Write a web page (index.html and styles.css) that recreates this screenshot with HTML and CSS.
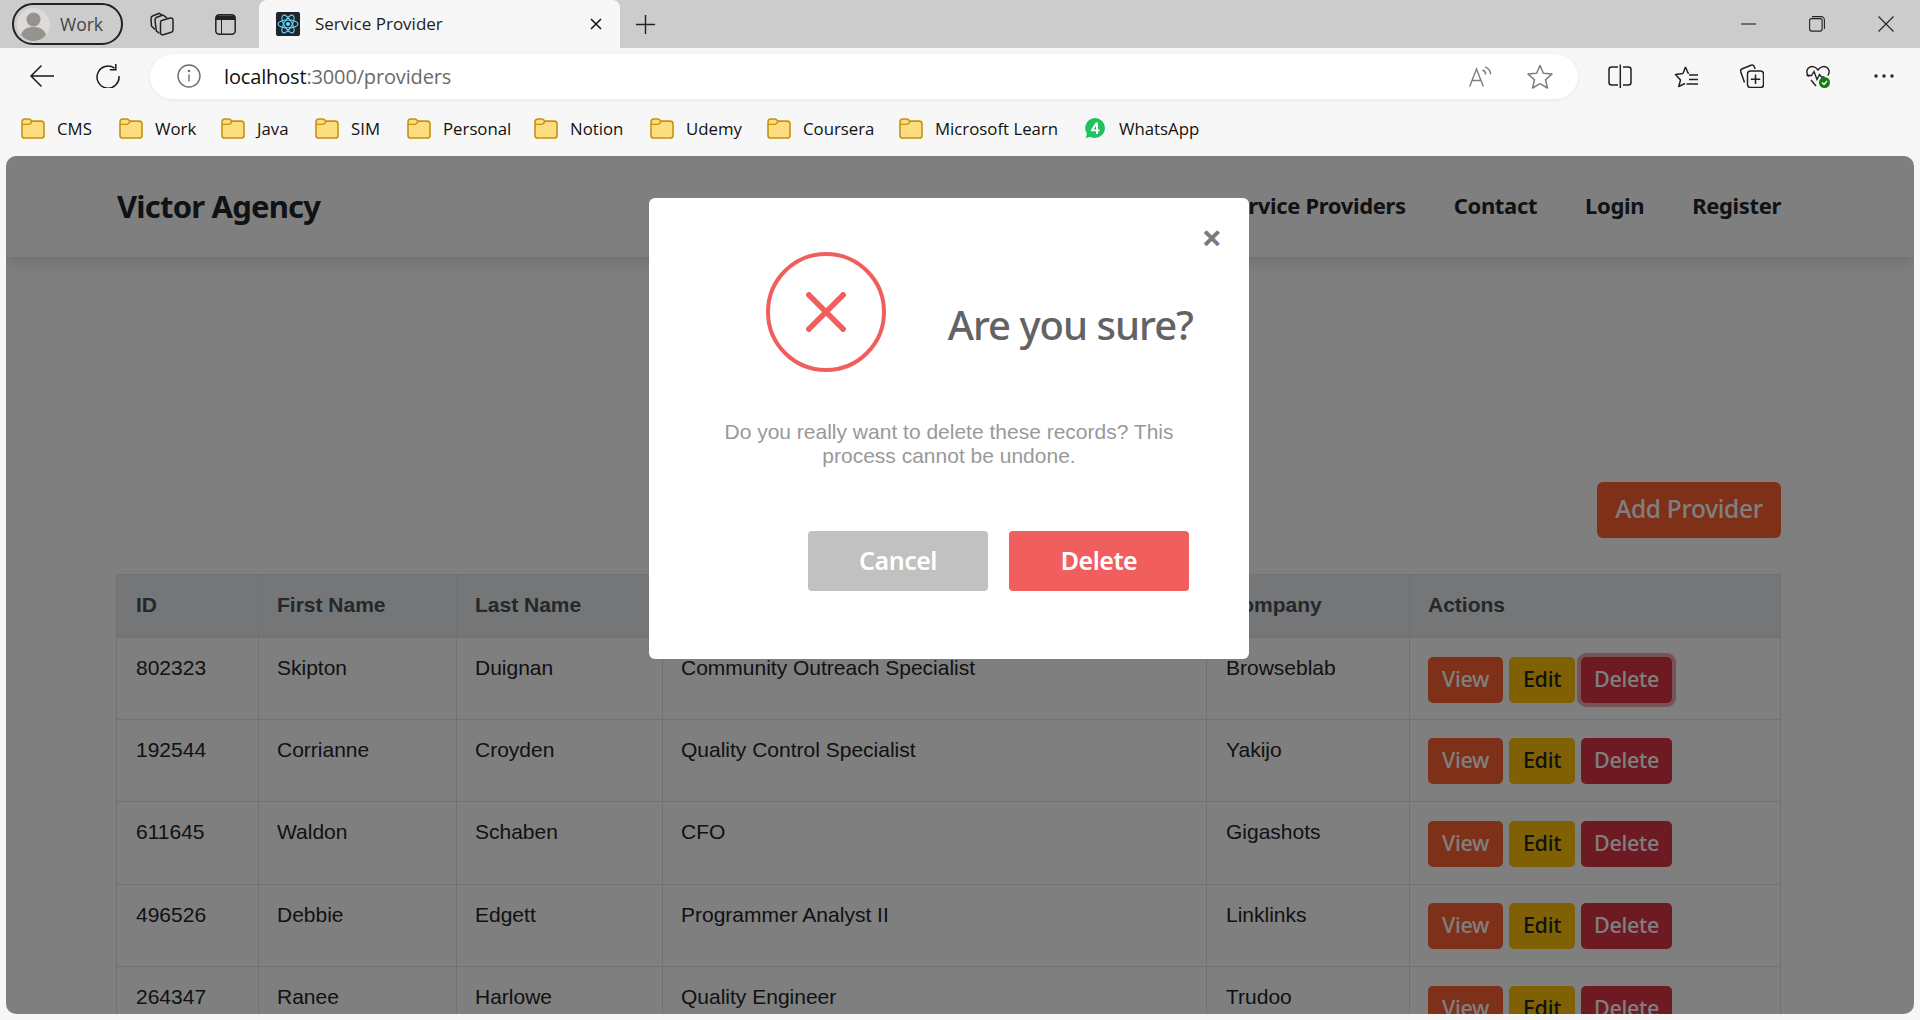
FILE: index.html
```html
<!DOCTYPE html>
<html lang="en">
<head>
<meta charset="utf-8">
<title>Service Provider</title>
<link rel="stylesheet" href="styles.css">
</head>
<body>
<svg class="defs" width="0" height="0" aria-hidden="true">
  <symbol id="folder" viewBox="0 0 24 21">
    <path d="M1 4.2C1 2.4 2.3 1 4 1h3.6c.9 0 1.6.4 2.2 1l1 1.1H20.4C22 3.1 23 4.2 23 5.8v11.6c0 1.6-1.1 2.6-2.6 2.6H3.6C2 20 1 19 1 17.4z" fill="#fddd80" stroke="#c4930f" stroke-width="1.6"/>
    <path d="M1.2 6.4h6.2c.9 0 1.5-.3 2.1-.9l1.6-2" fill="none" stroke="#c4930f" stroke-width="1.4"/>
  </symbol>
</svg>

<header class="tabbar">
  <div class="profile">
    <svg class="avatar" viewBox="0 0 33 33"><circle cx="16.500" cy="16.500" r="16.500" fill="#dcdbd8"/><circle cx="16.500" cy="11.500" r="7" fill="#96928e"/><path d="M4 27c1.500-5.500 6-8 12.500-8s11 2.500 12.500 8c-3 3.800-7.500 6-12.500 6S7 30.800 4 27z" fill="#96928e"/></svg>
    <span>Work</span>
  </div>
  <svg class="ic-collections" viewBox="0 0 24 24" fill="none" stroke="#222" stroke-width="1.500" stroke-linejoin="round" stroke-linecap="round"><path d="M4.500 17L1.500 14 1 6.500C1 5.200 1.700 4.300 3 3.800L9.500 1.200 11.500 3"/><path d="M9 21L6.300 18.800 5 8C4.900 6.700 5.600 5.700 6.800 5.200L13 3 16.500 5.700"/><path d="M10.500 10.500C10.500 9.300 11.200 8.500 12.300 8.200L20.300 6C21.900 5.600 23 6.500 23 8V18C23 19.200 22.400 20 21.300 20.300L13.300 22.700C11.700 23.100 10.500 22.200 10.500 20.700Z"/></svg>
  <svg class="ic-vtabs" viewBox="0 0 21 21" fill="none" stroke="#222" stroke-width="1.500"><rect x=".8" y=".8" width="19.400" height="19.400" rx="3.500"/><path d="M1 1.500h19v4.500H7v14H6V6H1z" fill="#222" stroke="none"/></svg>
  <div class="tab">
    <svg class="favicon" viewBox="0 0 24 24"><rect width="24" height="24" rx="2" fill="#20232a"/><g fill="none" stroke="#61dafb" stroke-width="1.100"><ellipse cx="12" cy="12" rx="10" ry="4"/><ellipse cx="12" cy="12" rx="10" ry="4" transform="rotate(60 12 12)"/><ellipse cx="12" cy="12" rx="10" ry="4" transform="rotate(120 12 12)"/></g><circle cx="12" cy="12" r="2" fill="#61dafb"/></svg>
    <span class="tab-title">Service Provider</span>
    <svg class="tab-close" viewBox="0 0 12 12" stroke="#111" stroke-width="1.500"><path d="M1 1l10 10M11 1L1 11"/></svg>
  </div>
  <svg class="ic-plus" viewBox="0 0 22 22" stroke="#222" stroke-width="1.500"><path d="M11 1v20M1 11h20"/></svg>
  <div class="winctl">
    <svg viewBox="0 0 16 16" stroke="#222" stroke-width="1.100" fill="none"><path d="M0 8h15"/></svg>
    <svg viewBox="0 0 16 16" stroke="#222" stroke-width="1.100" fill="none"><rect x=".6" y="2.600" width="12.500" height="12.500" rx="2"/><path d="M3 .6h9c1.800 0 3.400 1.500 3.400 3.400v9"/></svg>
    <svg viewBox="0 0 16 16" stroke="#222" stroke-width="1.100" fill="none"><path d="M.5.500l15 15M15.500.500l-15 15"/></svg>
  </div>
</header>

<div class="toolbar">
  <div class="tb-btn"><svg class="ic24" viewBox="0 0 24 24" fill="none" stroke="#1a1a1a" stroke-width="1.500"><path d="M24 12H1.500M11.500 1.500L1 12l10.500 10.500"/></svg></div>
  <div class="tb-btn"><svg class="ic24" viewBox="0 0 24 24" fill="none" stroke="#1a1a1a" stroke-width="1.500"><path d="M18.500 4.200A11 11 0 1 0 23 12"/><path d="M19.800 0v5.700h-6"/></svg></div>
  <div class="omnibox">
    <svg class="ic-info" viewBox="0 0 24 24" fill="none" stroke="#6e6e6e" stroke-width="1.400"><circle cx="12" cy="12" r="11"/><path d="M12 10.500v7"/><circle cx="12" cy="7" r=".6" fill="#6e6e6e"/></svg>
    <span class="url"><span class="url-host">localhost</span>:3000/providers</span>
    <svg class="ic-read" viewBox="0 0 24 21" fill="none" stroke="#7d7d7d" stroke-width="1.400"><path d="M.7 20.500L7.500 3l6.800 17.500M3 14.500h9"/><path d="M13.500 4c1.800.6 3 2.200 3.200 4.500M16 .8c3 1 5.300 3.700 5.600 7.500"/></svg>
    <svg class="ic-star" viewBox="0 0 26 25" fill="none" stroke="#7d7d7d" stroke-width="1.500"><path d="M13 1.500l3.400 7.800 8.500.8-6.400 5.600 1.900 8.300L13 19.700 5.600 24l1.900-8.300L1.100 10.100l8.500-.8z" stroke-linejoin="round"/></svg>
  </div>
  <div class="tb-right">
    <div class="tb-btn"><svg class="ic24" viewBox="0 0 24 24" fill="none" stroke="#222" stroke-width="1.500"><path d="M10 3H3.500C2 3 1 4 1 5.500v13C1 20 2 21 3.500 21H10M15 3h5.500C22 3 23 4 23 5.500v13c0 1.500-1 2.500-2.500 2.500H15"/><path d="M12.300.5v23.500"/></svg></div>
    <div class="tb-btn"><svg class="ic24" viewBox="0 0 24 24" fill="none" stroke="#222" stroke-width="1.500"><path d="M11.500 3l2.500 6 1 .3M9 9.500l-7.500 1 5 5.500-1.800 6.500 6.300-3M11.500 3L9 9.500" stroke-linejoin="round"/><path d="M15 11h9M15 15.500h9M12.500 20h11.500"/></svg></div>
    <div class="tb-btn"><svg class="ic24" viewBox="0 0 24 24" fill="none" stroke="#222" stroke-width="1.500"><path d="M4.500 18.500L.8 8c-.4-1.400.3-2.700 1.500-3.200L11 1.200c1.400-.5 2.700.2 3.300 1.600l.8 2.200"/><rect x="7.500" y="7" width="16" height="16.500" rx="3"/><path d="M15.500 10.500v9.500M10.800 15.300h9.400"/></svg></div>
    <div class="tb-btn"><svg class="ic24" viewBox="0 0 24 24" fill="none"><path d="M3 12.500C1 10.500.5 8.500 1 6.500 1.800 3.500 5 1.800 8 2.800c1.500.5 3 1.800 4 3.200 1-1.400 2.500-2.700 4-3.200 3-1 6.200.7 7 3.700.4 1.800 0 3.500-1.200 5.200" stroke="#222" stroke-width="1.400"/><path d="M.5 11.500h5l2.500-4 3 8 2.500-5 2 2.500h3M5 16l5 6" stroke="#222" stroke-width="1.400"/><circle cx="18.500" cy="18.500" r="5.500" fill="#107c10"/><path d="M16 18.500l2 2 3-3.500" stroke="#fff" stroke-width="1.400"/></svg></div>
    <div class="tb-btn"><svg class="ic-more" viewBox="0 0 20 4" fill="#222"><circle cx="2" cy="2" r="1.700"/><circle cx="10" cy="2" r="1.700"/><circle cx="18" cy="2" r="1.700"/></svg></div>
  </div>
</div>

<nav class="bookmarks">
  <a class="bm"><svg class="folder"><use href="#folder"/></svg><span>CMS</span></a>
  <a class="bm"><svg class="folder"><use href="#folder"/></svg><span>Work</span></a>
  <a class="bm"><svg class="folder"><use href="#folder"/></svg><span>Java</span></a>
  <a class="bm"><svg class="folder"><use href="#folder"/></svg><span>SIM</span></a>
  <a class="bm"><svg class="folder"><use href="#folder"/></svg><span>Personal</span></a>
  <a class="bm"><svg class="folder"><use href="#folder"/></svg><span>Notion</span></a>
  <a class="bm"><svg class="folder"><use href="#folder"/></svg><span>Udemy</span></a>
  <a class="bm"><svg class="folder"><use href="#folder"/></svg><span>Coursera</span></a>
  <a class="bm"><svg class="folder"><use href="#folder"/></svg><span>Microsoft Learn</span></a>
  <a class="bm"><svg class="wa" viewBox="0 0 20 20"><path d="M10 0a10 10 0 0 1 0 20c-1.700 0-3.300-.4-4.700-1.200L.7 20l1.300-4.400A10 10 0 0 1 10 0z" fill="#1fc25c"/><path d="M10.800 4.500L6 11.800v1.400h5v2.800h2v-2.800h1.500v-1.700H13V4.500zM11 7.800v3.700H8.500z" fill="#fff"/></svg><span>WhatsApp</span></a>
</nav>

<main class="viewport">
  <div class="site-nav">
    <span class="brand">Victor Agency</span>
    <ul class="nav-links">
      <li>Home</li>
      <li>About</li>
      <li>Service Providers</li>
      <li>Contact</li>
      <li>Login</li>
      <li>Register</li>
    </ul>
  </div>
  <section class="content">
    <div class="add-row"><button class="btn btn-add">Add Provider</button></div>
    <table class="grid">
      <colgroup><col class="c1"><col class="c2"><col class="c3"><col class="c4"><col class="c5"><col class="c6"></colgroup>
      <thead><tr><th>ID</th><th>First Name</th><th>Last Name</th><th>Job Title</th><th>Company</th><th>Actions</th></tr></thead>
      <tbody>
        <tr><td>802323</td><td>Skipton</td><td>Duignan</td><td>Community Outreach Specialist</td><td>Browseblab</td><td><div class="acts"><button class="btn btn-s view">View</button><button class="btn btn-s edit">Edit</button><button class="btn btn-s del focus">Delete</button></div></td></tr>
        <tr><td>192544</td><td>Corrianne</td><td>Croyden</td><td>Quality Control Specialist</td><td>Yakijo</td><td><div class="acts"><button class="btn btn-s view">View</button><button class="btn btn-s edit">Edit</button><button class="btn btn-s del">Delete</button></div></td></tr>
        <tr><td>611645</td><td>Waldon</td><td>Schaben</td><td>CFO</td><td>Gigashots</td><td><div class="acts"><button class="btn btn-s view">View</button><button class="btn btn-s edit">Edit</button><button class="btn btn-s del">Delete</button></div></td></tr>
        <tr><td>496526</td><td>Debbie</td><td>Edgett</td><td>Programmer Analyst II</td><td>Linklinks</td><td><div class="acts"><button class="btn btn-s view">View</button><button class="btn btn-s edit">Edit</button><button class="btn btn-s del">Delete</button></div></td></tr>
        <tr><td>264347</td><td>Ranee</td><td>Harlowe</td><td>Quality Engineer</td><td>Trudoo</td><td><div class="acts"><button class="btn btn-s view">View</button><button class="btn btn-s edit">Edit</button><button class="btn btn-s del">Delete</button></div></td></tr>
      </tbody>
    </table>
  </section>

  <div class="overlay"></div>
  <div class="modal" role="dialog">
    <span class="modal-close">×</span>
    <div class="modal-head">
      <div class="icon-box"><svg viewBox="0 0 40 40" stroke="#f15e5e" stroke-width="5.500"><path d="M1 1l38 38M39 1L1 39"/></svg></div>
      <h2 class="modal-title">Are you sure?</h2>
    </div>
    <p class="modal-text">Do you really want to delete these records? This process cannot be undone.</p>
    <div class="modal-foot">
      <button class="mbtn cancel">Cancel</button>
      <button class="mbtn confirm">Delete</button>
    </div>
  </div>
</main>
</body>
</html>
```

FILE: styles.css
```css
* { box-sizing: border-box; }
html, body { margin: 0; padding: 0; }
body {
  width: 1920px;
  height: 1020px;
  overflow: hidden;
  background: #f7f7f7;
  font-family: "Open Sans", "Noto Sans", sans-serif;
  color: #111;
}
.defs { position: absolute; }

/* Browser tab strip */
.tabbar {
  height: 48px;
  background: #cccccc;
  display: flex;
  align-items: center;
  position: relative;
}
.profile {
  margin-left: 12px;
  width: 111px;
  height: 42px;
  border: 2px solid #222;
  border-radius: 21px;
  display: flex;
  align-items: center;
  gap: 10px;
  padding-left: 3px;
  font-size: 17.500px;
  color: #444;
}
.avatar { width: 33px; height: 33px; }
.ic-collections { width: 24px; height: 24px; margin-left: 27px; }
.ic-vtabs { width: 21px; height: 21px; margin-left: 41px; }
.tab {
  margin-left: 23px;
  width: 361px;
  height: 48px;
  background: #f7f7f7;
  border-radius: 8px 8px 0 0;
  display: flex;
  align-items: center;
  padding-left: 17px;
}
.favicon { width: 24px; height: 24px; }
.tab-title { margin-left: 15px; padding-bottom: 2px; font-size: 17px; color: #222; width: 266px; white-space: nowrap; }
.tab-close { width: 12px; height: 12px; margin-left: 9px; }
.ic-plus { width: 21px; height: 21px; margin-left: 15px; }
.winctl { margin-left: auto; display: flex; gap: 52px; padding-right: 26px; }
.winctl svg { width: 16px; height: 16px; }
.winctl svg:last-child { margin-left: 1px; }

/* Address bar row */
.toolbar {
  height: 52px;
  display: flex;
  align-items: center;
  padding-left: 9px;
  padding-top: 4px;
}
.tb-btn { width: 66px; display: flex; justify-content: center; align-items: center; }
.ic24 { width: 24px; height: 24px; }
.ic-more { width: 20px; height: 4px; }
.omnibox {
  margin-left: 9px;
  width: 1428px;
  height: 45px;
  background: #fff;
  border-radius: 23px;
  box-shadow: 0 1px 4px rgba(0,0,0,.07);
  display: flex;
  align-items: center;
  padding-left: 27px;
}
.ic-info { width: 24px; height: 24px; }
.url { margin-left: 23px; font-size: 20px; color: #6a6a6a; letter-spacing: -.15px; }
.url-host { color: #111; }
.ic-read { width: 24px; height: 21px; margin-left: auto; }
.ic-star { width: 26px; height: 25px; margin-left: 34px; margin-right: 25px; }
.tb-right { margin-left: 9px; display: flex; }

/* Bookmarks */
.bookmarks {
  height: 56px;
  display: grid;
  grid-template-columns: 98px 102px 94px 92px 127px 116px 117px 132px 186px 120px;
  align-items: center;
  padding-left: 21px;
  font-size: 16.800px;
}
.bm { display: flex; align-items: center; gap: 12px; white-space: nowrap; color: #111; }
.folder { width: 24px; height: 21px; }
.wa { width: 20px; height: 20px; margin-right: 2px; }

/* Page viewport */
.viewport {
  position: relative;
  margin: 0 6px;
  width: 1908px;
  height: 858px;
  overflow: hidden;
  background: #fff;
  border-radius: 10px;
  font-family: "Liberation Sans", Arial, sans-serif;
  color: #212529;
}
.site-nav {
  position: relative;
  height: 101px;
  padding: 0 133px 4px 111px;
  display: flex;
  align-items: center;
  justify-content: space-between;
  background: #fff;
  box-shadow: 0 4px 16px rgba(0,0,0,.16);
}
.brand {
  padding-top: 2px;
  font-family: "Noto Sans", sans-serif;
  font-weight: 700;
  font-size: 31px;
  letter-spacing: -.8px;
  color: #212529;
}
.nav-links {
  list-style: none;
  margin: 0;
  padding: 0;
  display: flex;
  gap: 48px;
  font-family: "Noto Sans", sans-serif;
  font-weight: 700;
  font-size: 22px;
  letter-spacing: -.35px;
  color: #212529;
}
.content { padding: 0 133px 0 110px; }
.add-row { display: flex; justify-content: flex-end; padding-top: 225px; margin-bottom: 36px; }
.btn {
  border: 0;
  color: #fff;
  font-family: "Noto Sans", sans-serif;
  font-weight: 500;
}
.btn-add {
  width: 184px;
  height: 56px;
  border-radius: 6px;
  background: #fc6032;
  font-size: 24.500px;
  letter-spacing: -.3px;
  padding: 0 0 4px;
}
.grid {
  width: 1664px;
  table-layout: fixed;
  border-collapse: collapse;
  font-size: 21px;
  line-height: 31px;
}
.c1 { width: 142px; }
.c2 { width: 198px; }
.c3 { width: 206px; }
.c4 { width: 544px; }
.c5 { width: 203px; }
.c6 { width: 371px; }
.grid th, .grid td {
  border: 1px solid #dee2e6;
  padding: 14px 18px;
  text-align: left;
  vertical-align: top;
}
.grid th:first-child, .grid td:first-child,
.grid th:nth-child(5), .grid td:nth-child(5) { padding-left: 19px; }
.grid th {
  height: 62px;
  padding-top: 13.500px;
  padding-bottom: 12px;
  background: #e9ecef;
  color: #495057;
  font-weight: 700;
  border-bottom-width: 3px;
}
.grid td { height: 82.500px; }
.acts { display: flex; gap: 6px; padding-top: 4.500px; }
.btn-s {
  height: 46px;
  padding: 0 0 3px;
  border-radius: 5px;
  font-size: 21.500px;
  letter-spacing: -.3px;
}
.view { width: 75px; background: #fc6032; }
.edit { width: 66px; background: #ffc107; color: #212529; }
.del { width: 91px; background: #dc3545; }
.focus { box-shadow: 0 0 0 4px rgba(225,83,97,.5); }

/* Modal */
.overlay { position: absolute; inset: 0; background: rgba(0,0,0,.5); }
.modal {
  position: absolute;
  left: 643px;
  top: 42px;
  width: 600px;
  height: 461px;
  background: #fff;
  border-radius: 6px;
  font-family: "Noto Sans", sans-serif;
}
.modal-close {
  position: absolute;
  right: 27px;
  top: 12px;
  font-size: 36px;
  line-height: 56px;
  font-weight: 700;
  color: #7a7a7a;
}
.modal-head {
  display: flex;
  justify-content: space-between;
  align-items: center;
  padding: 54px 56px 0 117px;
}
.icon-box {
  width: 120px;
  height: 120px;
  border: 4px solid #f15e5e;
  border-radius: 50%;
  display: flex;
  align-items: center;
  justify-content: center;
}
.icon-box svg { width: 40px; height: 40px; }
.modal-title {
  margin: 26px 0 0;
  font-size: 40px;
  line-height: 54px;
  font-weight: 500;
  letter-spacing: -1px;
  color: #636363;
}
.modal-text {
  margin: 48px auto 0;
  width: 480px;
  text-align: center;
  font-family: "Liberation Sans", Arial, sans-serif;
  font-size: 21px;
  line-height: 24px;
  color: #999;
}
.modal-foot {
  display: flex;
  justify-content: flex-end;
  gap: 21px;
  padding: 63px 60px 0 0;
}
.mbtn {
  width: 180px;
  height: 60px;
  border: 0;
  border-radius: 4px;
  color: #fff;
  font-family: "Noto Sans", sans-serif;
  font-weight: 600;
  font-size: 25px;
  letter-spacing: -.5px;
  padding: 0 0 2px;
}
.cancel { background: #c1c1c1; }
.confirm { background: #f15e5e; }
```
